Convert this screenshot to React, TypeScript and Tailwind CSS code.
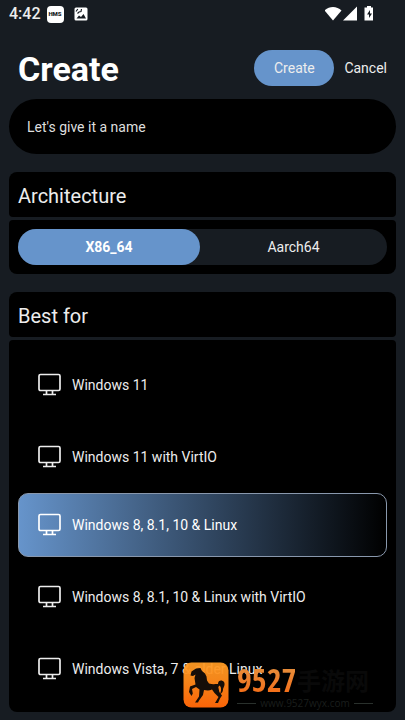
import { useState } from "react";

const systems = [
  "Windows 11",
  "Windows 11 with VirtIO",
  "Windows 8, 8.1, 10 & Linux",
  "Windows 8, 8.1, 10 & Linux with VirtIO",
  "Windows Vista, 7 & older Linux",
];

function Monitor() {
  return (
    <svg className="h-6 w-6 shrink-0" viewBox="0 0 24 24" fill="none" stroke="currentColor" strokeWidth="1.7" aria-hidden="true">
      <rect x="2" y="1.5" width="21" height="16" rx="1.5" />
      <path d="M9.500 18v4M15.500 18v4M6 21.500h13" />
    </svg>
  );
}

function StatusBar() {
  return (
    <div className="flex h-7 items-center pr-8 pl-[9px]">
      <span className="text-base font-medium">4:42</span>
      <span className="ml-1.5 flex h-[17px] w-[17px] items-center justify-center rounded bg-white text-[6px] font-black text-[#171c22]">HMS</span>
      <svg className="ml-2.5 h-3.5 w-3.5" viewBox="0 0 14 14" aria-hidden="true">
        <rect x="0.5" y="0.5" width="13" height="13" rx="1.5" fill="#fff" />
        <path d="M2.500 11.500 5 8.500l2 1.500 2.500-3 2.500 4.500z" fill="#171c22" />
        <path d="M2 4.500 3.800 2M3.500 6.500 5 5l2-.5L7.500 2" fill="none" stroke="#171c22" strokeWidth="1.2" />
      </svg>
      <svg className="ml-auto h-4 w-12" viewBox="0 0 48 16" fill="#fff" aria-hidden="true">
        <path d="M-.5 4.500C4-.3 12-.3 16.500 4.500L8 14.500z" />
        <path d="M32 .5v14H18z" />
        <path d="M42 0h4v1.500h2.500V14.500H39.500V1.500H42z" />
        <path d="M45 4l-3 4.500h2V12l3-4.500h-2z" fill="#171c22" />
      </svg>
    </div>
  );
}

function Watermark() {
  return (
    <div className="pointer-events-none absolute right-8 bottom-3 flex items-start gap-2">
      <svg className="h-[46px] w-[46px]" viewBox="0 0 46 46" aria-hidden="true">
        <defs>
          <linearGradient id="badge" x1="0" y1="0" x2="0" y2="1">
            <stop offset="0" stopColor="#ff9c24" stopOpacity="0.94" />
            <stop offset="0.35" stopColor="#ff8d1c" stopOpacity="0.96" />
            <stop offset="1" stopColor="#fa6408" />
          </linearGradient>
        </defs>
        <rect x="0.5" y="0.5" width="45" height="45" rx="8" fill="url(#badge)" />
        <path
          fill="#160e08"
          d="M17.500 6l1.500 3 3 2.500 1.500 3 .5 4 2 3c3 1 6 .5 9 .5 0-4 4-4.500 6-2 1.500 3-.5 5-1 7.500 0 2-1 3.500-3 4.500 1.500-3 1.500-7-.5-8.500l-1.200 1.500 1 5 2.700 3.500-2 3-2 4.500h-3l3.500-6-4-4-2.500-3.500c-3 1.500-5.500 1-8 .5l-1 5-4 5.500-1 2h-3l4-6 .5-7-3.500-2.500-4 2 .8 4.500-1.300 2.500-2.500-4 1-5.500 5.500-2-1-6.500 1-3.500-2.500 1.500-2.500-.5 1-4 4.500-3z"
        />
      </svg>
      <div className="w-[136px]">
        <div className="flex h-9 items-center">
          <span className="w-[60px] bg-gradient-to-b from-[#e3913e] to-[#f66a10] bg-clip-text font-['Open_Sans_Condensed','Liberation_Sans_Narrow','Noto_Sans',sans-serif] text-[32px] leading-none font-bold text-transparent">9527</span>
          <span className="font-['Noto_Sans_CJK_SC',sans-serif] text-2xl leading-none font-bold text-[#090909]">手游网</span>
        </div>
        <div className="flex items-center gap-1 text-[#1a1e1c]">
          <span className="h-px flex-1 bg-[#29302c]" />
          <span className="font-['Open_Sans',sans-serif] text-[10px] leading-none">www.9527wyx.com</span>
          <span className="h-px flex-1 bg-[#29302c]" />
        </div>
      </div>
    </div>
  );
}

export default function App() {
  const [arch, setArch] = useState("X86_64");
  const [system, setSystem] = useState(2);
  return (
    <div className="relative min-h-screen bg-[#171c22] pb-2 font-[Roboto,sans-serif] text-sm text-[#ededed]">
      <StatusBar />
      <main className="px-[9px]">
        <header className="flex h-[71px] items-center px-[9px] pt-3">
          <h1 className="flex-1 text-[34px] font-bold text-white">Create</h1>
          <div className="flex items-center gap-2.5 pb-1">
            <button className="h-9 w-20 rounded-full bg-[#6694cb]">Create</button>
            <button>Cancel</button>
          </div>
        </header>
        <input
          aria-label="Name"
          placeholder="Let's give it a name"
          className="block h-[55px] w-full rounded-full bg-black px-[18px] outline-none placeholder:text-[#dedede]"
        />
        <section className="mt-[18px]">
          <h2 className="rounded-t-lg rounded-b-sm bg-black px-[9px] pt-2.5 pb-[7px] text-xl">Architecture</h2>
          <div className="mt-[3px] rounded-t-sm rounded-b-lg bg-black p-[9px]">
            <div className="grid h-9 grid-cols-[182fr_187fr] rounded-full bg-[#171c22]">
              {["X86_64", "Aarch64"].map((name) => (
                <button
                  key={name}
                  aria-pressed={arch === name}
                  onClick={() => setArch(name)}
                  className={arch === name ? "rounded-full bg-[#6694cb] font-bold text-white" : "rounded-full"}
                >
                  {name}
                </button>
              ))}
            </div>
          </div>
        </section>
        <section className="mt-[18px]">
          <h2 className="rounded-t-lg rounded-b-sm bg-black px-[9px] pt-2.5 pb-[7px] text-xl">Best for</h2>
          <div className="mt-[3px] rounded-t-sm rounded-b-lg bg-black px-[9px] pt-[9px] pb-[7px]">
            {systems.map((name, i) => (
              <button
                key={name}
                aria-pressed={system === i}
                onClick={() => setSystem(i)}
                className={
                  system === i
                    ? "mb-1 flex h-16 w-full items-center gap-[11px] rounded-[10px] border border-[#8998ad] bg-linear-to-r/srgb from-[#6694cb] to-black pl-[18px] text-left text-white"
                    : "flex h-[72px] w-full items-center gap-[11px] pl-[19px] text-left"
                }
              >
                <Monitor />
                {name}
              </button>
            ))}
          </div>
        </section>
      </main>
      <Watermark />
    </div>
  );
}
